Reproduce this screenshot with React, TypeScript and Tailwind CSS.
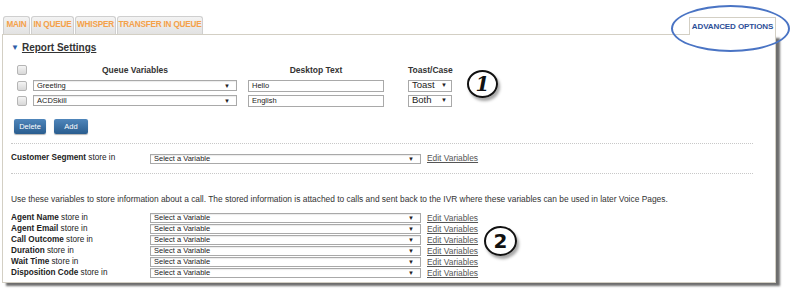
import React from "react";

const Sel = ({ w, text, h = 11 }: { w: string; text: string; h?: number }) => (
  <div
    className={`${w} ${h === 11 ? "h-[11px]" : "h-[10px]"} border border-[#a9a9a9] bg-white flex items-center justify-between pl-[3px] pr-[6px] text-[7.5px] leading-none text-[#222] shadow-[inset_0_1px_1px_rgba(0,0,0,0.08)] whitespace-nowrap`}
  >
    <span>{text}</span>
    <span className="text-[6px]">▼</span>
  </div>
);

const Cb = () => (
  <div className="w-[10px] h-[10px] rounded-[2px] border border-[#b5b5b5] bg-gradient-to-b from-[#f4f4f4] to-[#d8d8d8] shrink-0" />
);

const Tab = ({ label, w }: { label: string; w: string }) => (
  <div
    className={`${w} h-[18px] mr-[1px] rounded-t-[3px] border border-b-0 border-[#cfcfcf] bg-gradient-to-b from-[#f3f3f3] to-[#e2e2e2] flex items-center justify-center text-[8.2px] font-bold text-[#f4a149] whitespace-nowrap tracking-[-0.2px]`}
  >
    {label}
  </div>
);

const Row = ({ bold }: { bold: string }) => (
  <div className="flex items-center h-[11px]">
    <div className="w-[139px] text-[8.2px] text-[#222] leading-none whitespace-nowrap">
      <span className="font-bold">{bold}</span> store in
    </div>
    <Sel w="w-[271px]" text="Select a Variable" h={10} />
    <a className="ml-[6px] text-[8.4px] leading-none text-[#555] underline whitespace-nowrap">Edit Variables</a>
  </div>
);

export default function App() {
  return (
    <div className="w-[800px] h-[302px] bg-white relative font-['Liberation_Sans',Arial,sans-serif] overflow-hidden">
      <div className="pt-[17px] pl-[2px] w-[776px]">
        {/* tabs */}
        <div className="flex items-end h-[18px]">
          <div className="flex items-end flex-1 border-b border-[#d3cfc4] h-[18px]">
            <div className="ml-[1px]" />
            <Tab label="MAIN" w="w-[27px]" />
            <Tab label="IN QUEUE" w="w-[43px]" />
            <Tab label="WHISPER" w="w-[41px]" />
            <Tab label="TRANSFER IN QUEUE" w="w-[86px]" />
          </div>
          <div className="w-[87px] h-[18px] border border-b-0 border-[#d3cfc4] bg-white flex items-center justify-center text-[8px] font-bold text-[#2d4f98] whitespace-nowrap tracking-[-0.1px]">
            ADVANCED OPTIONS
          </div>
        </div>
        {/* panel */}
        <div className="h-[248px] border border-t-0 border-[#d3cfc4] bg-white shadow-[4px_3px_2px_rgba(60,60,60,0.75)] pl-[8px] pt-[7px]">
          <div className="flex items-center h-[12px]">
            <span className="text-[#2d5da8] text-[8px] mr-[3px] leading-none">▼</span>
            <span className="text-[10px] font-bold text-[#333] underline leading-none">Report Settings</span>
          </div>

          <div className="mt-[9px] pl-[6px]">
            <div className="flex items-center h-[14px]">
              <Cb />
              <div className="ml-[6px] w-[204px] text-center text-[8.5px] font-bold text-[#333]">Queue Variables</div>
              <div className="ml-[11px] w-[136px] text-center text-[8.5px] font-bold text-[#333]">Desktop Text</div>
              <div className="ml-[24px] w-[44px] text-center text-[8.5px] font-bold text-[#333] whitespace-nowrap">Toast/Case</div>
            </div>
            <div className="flex items-center h-[15px] mt-[1px]">
              <Cb />
              <div className="ml-[6px]"><Sel w="w-[204px]" text="Greeting" /></div>
              <div className="ml-[11px] w-[136px] h-[12px] border border-[#a9a9a9] text-[7.5px] pl-[3px] flex items-center text-[#222]">Hello</div>
              <div className="ml-[24px] w-[44px] h-[12px] border border-[#a9a9a9] text-[9.5px] pl-[3px] pr-[4px] flex items-center justify-between text-[#222]"><span>Toast</span><span className="text-[6px]">▼</span></div>
            </div>
            <div className="flex items-center h-[15px]">
              <Cb />
              <div className="ml-[6px]"><Sel w="w-[204px]" text="ACDSkill" /></div>
              <div className="ml-[11px] w-[136px] h-[12px] border border-[#a9a9a9] text-[7.5px] pl-[3px] flex items-center text-[#222]">English</div>
              <div className="ml-[24px] w-[44px] h-[12px] border border-[#a9a9a9] text-[9.5px] pl-[3px] pr-[4px] flex items-center justify-between text-[#222]"><span>Both</span><span className="text-[6px]">▼</span></div>
            </div>
          </div>

          <div className="flex mt-[11px] pl-[3px] gap-[8px]">
            <div className="w-[32px] h-[15px] rounded-[2px] bg-gradient-to-b from-[#4f86bb] to-[#2a5d8f] text-white text-[7.5px] flex items-center justify-center shadow-[0_1px_1px_rgba(0,0,0,0.3)]">Delete</div>
            <div className="w-[34px] h-[15px] rounded-[2px] bg-gradient-to-b from-[#4f86bb] to-[#2a5d8f] text-white text-[7.5px] flex items-center justify-center shadow-[0_1px_1px_rgba(0,0,0,0.3)]">Add</div>
          </div>

          <div className="mt-[9px] w-[742px] border-t border-dotted border-[#c8c8c8]" />
          <div className="mt-[9px] flex items-center h-[11px]">
            <div className="w-[139px] text-[8.2px] text-[#222] leading-none whitespace-nowrap">
              <span className="font-bold">Customer Segment</span> store in
            </div>
            <Sel w="w-[271px]" text="Select a Variable" h={10} />
            <a className="ml-[6px] text-[8.4px] leading-none text-[#555] underline whitespace-nowrap">Edit Variables</a>
          </div>
          <div className="mt-[9px] w-[742px] border-t border-dotted border-[#c8c8c8]" />

          <div className="mt-[21px] text-[8.4px] text-[#333] leading-none whitespace-nowrap">
            Use these variables to store information about a call. The stored information is attached to calls and sent back to the IVR where these variables can be used in later Voice Pages.
          </div>

          <div className="mt-[9px] flex flex-col">
            <Row bold="Agent Name" />
            <Row bold="Agent Email" />
            <Row bold="Call Outcome" />
            <Row bold="Duration" />
            <Row bold="Wait Time" />
            <Row bold="Disposition Code" />
          </div>
        </div>
      </div>

      {/* annotations */}
      <div className="absolute left-[671px] top-[5px] w-[119px] h-[47px] rounded-[50%] border-[2px] border-[#4a74c4]" />
      <div className="absolute left-[467px] top-[70px] w-[31px] h-[28px] rounded-[50%] border-[2px] border-[#111] shadow-[2px_3px_3px_rgba(0,0,0,0.35)] flex items-center justify-center text-[20px] font-bold italic text-[#111] font-['DejaVu_Serif',serif] leading-none">1</div>
      <div className="absolute left-[484px] top-[226px] w-[33px] h-[30px] rounded-[50%] border-[2px] border-[#111] shadow-[2px_3px_3px_rgba(0,0,0,0.35)] flex items-center justify-center text-[20px] font-bold text-[#111] font-['DejaVu_Sans',sans-serif] leading-none">2</div>
    </div>
  );
}
